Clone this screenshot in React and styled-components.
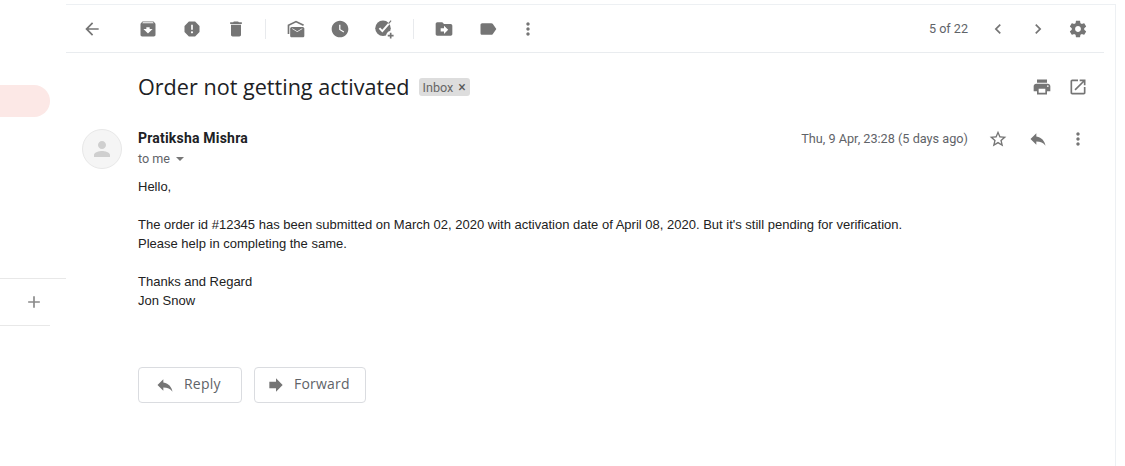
import styled, { createGlobalStyle } from 'styled-components'

const GlobalStyle = createGlobalStyle`
  html, body {
    margin: 0;
    height: 100%;
    background: #fff;
    overflow: hidden;
  }
  body {
    font-family: Roboto, "Liberation Sans", sans-serif;
  }
`

const paths = {
  back: 'M20 11H7.83l5.59-5.59L12 4l-8 8 8 8 1.41-1.41L7.83 13H20v-2z',
  archive: 'M20.54 5.23l-1.39-1.68C18.88 3.21 18.47 3 18 3H6c-.47 0-.88.21-1.16.55L3.46 5.23C3.17 5.57 3 6.02 3 6.5V19c0 1.1.9 2 2 2h14c1.1 0 2-.9 2-2V6.5c0-.48-.17-.93-.46-1.27zM12 17.5L6.5 12H10v-2h4v2h3.5L12 17.5zM5.12 5l.81-1h12l.94 1H5.12z',
  report: 'M15.73 3H8.27L3 8.27v7.46L8.27 21h7.46L21 15.73V8.27L15.73 3zM12 17.3c-.72 0-1.3-.58-1.3-1.3 0-.72.58-1.3 1.3-1.3.72 0 1.3.58 1.3 1.3 0 .72-.58 1.3-1.3 1.3zm1-4.3h-2V7h2v6z',
  trash: 'M6 19c0 1.1.9 2 2 2h8c1.1 0 2-.9 2-2V7H6v12zM19 4h-3.5l-1-1h-5l-1 1H5v2h14V4z',
  unread: 'M12 2L2 7v11h2V8.2L12 4.2l8.6 4.1 1-1.6L12 2zM7 9.5c-1.1 0-2 .9-2 2V20c0 1.1.9 2 2 2h13c1.1 0 2-.9 2-2v-8.500c0-1.100-.9-2-2-2H7zm6.500 6.200L7.500 12v-1l6 3.600 6-3.600v1l-6 3.700z',
  clock: 'M12 2C6.5 2 2 6.5 2 12s4.500 10 10 10 10-4.500 10-10S17.500 2 12 2zm4.200 14.200L11 13V7h1.500v5.200l4.500 2.700-.8 1.300z',
  move: 'M20 6h-8l-2-2H4c-1.100 0-1.990.9-1.990 2L2 18c0 1.100.9 2 2 2h16c1.100 0 2-.9 2-2V8c0-1.100-.9-2-2-2zm-8 12v-3H8v-4h4V8l5 5-5 5z',
  label: 'M17.630 5.840C17.270 5.330 16.670 5 16 5L5 5.010C3.900 5.010 3 5.900 3 7v10c0 1.100.9 1.990 2 1.990L16 19c.67 0 1.270-.33 1.630-.84L22 12l-4.370-6.160z',
  more: 'M12 8c1.100 0 2-.9 2-2s-.9-2-2-2-2 .9-2 2 .9 2 2 2zm0 2c-1.100 0-2 .9-2 2s.9 2 2 2 2-.9 2-2-.9-2-2-2zm0 6c-1.100 0-2 .9-2 2s.9 2 2 2 2-.9 2-2-.9-2-2-2z',
  prev: 'M15.410 7.410L14 6l-6 6 6 6 1.410-1.410L10.830 12z',
  next: 'M10 6L8.590 7.410 13.170 12l-4.580 4.590L10 18l6-6z',
  gear: 'M19.430 12.980c.04-.32.07-.64.07-.98s-.03-.66-.07-.98l2.110-1.650c.19-.15.24-.42.12-.64l-2-3.460c-.12-.22-.39-.3-.61-.22l-2.490 1c-.52-.4-1.080-.73-1.690-.98l-.38-2.650C14.460 2.180 14.250 2 14 2h-4c-.25 0-.46.18-.49.42l-.38 2.650c-.61.25-1.170.59-1.690.98l-2.490-1c-.23-.09-.49 0-.61.22l-2 3.460c-.13.22-.07.49.12.64l2.110 1.650c-.04.32-.07.65-.07.98s.03.66.07.98l-2.110 1.650c-.19.15-.24.42-.12.64l2 3.460c.12.22.39.3.61.22l2.490-1c.52.4 1.080.73 1.690.98l.38 2.650c.03.24.24.42.49.42h4c.25 0 .46-.18.49-.42l.38-2.650c.61-.25 1.170-.59 1.690-.98l2.490 1c.23.09.49 0 .61-.22l2-3.460c.12-.22.07-.49-.12-.64l-2.110-1.650zM12 15.500c-1.930 0-3.500-1.570-3.500-3.500s1.570-3.500 3.500-3.500 3.500 1.570 3.500 3.500-1.570 3.500-3.500 3.500z',
  print: 'M19 8H5c-1.660 0-3 1.340-3 3v6h4v4h12v-4h4v-6c0-1.660-1.340-3-3-3zm-3 11H8v-5h8v5zm3-7c-.55 0-1-.45-1-1s.45-1 1-1 1 .45 1 1-.45 1-1 1zm-1-9H6v4h12V3z',
  open: 'M19 19H5V5h7V3H5c-1.110 0-2 .9-2 2v14c0 1.100.89 2 2 2h14c1.100 0 2-.9 2-2v-7h-2v7zM14 3v2h3.590l-9.830 9.830 1.410 1.410L19 6.410V10h2V3h-7z',
  star: 'M22 9.240l-7.190-.62L12 2 9.190 8.630 2 9.240l5.460 4.730L5.820 21 12 17.270 18.180 21l-1.630-7.030L22 9.240zM12 15.400l-3.760 2.270 1-4.280-3.320-2.880 4.380-.38L12 6.100l1.710 4.040 4.380.38-3.320 2.880 1 4.280L12 15.400z',
  reply: 'M10 9V5l-7 7 7 7v-4.100c5 0 8.500 1.600 11 5.100-1-5-4-10-11-11z',
  forward: 'M12 8V4l8 8-8 8v-4H4V8z',
  person: 'M12 12c2.210 0 4-1.790 4-4s-1.790-4-4-4-4 1.790-4 4 1.790 4 4 4zm0 2c-2.670 0-8 1.340-8 4v2h16v-2c0-2.660-5.330-4-8-4z',
  add: 'M19 13h-6v6h-2v-6H5v-2h6V5h2v6h6v2z',
}

const Svg = styled.svg`
  display: block;
  flex: none;
  fill: ${p => p.$color || '#757575'};
`

const Icon = ({ name, size = 20, color }) => (
  <Svg width={size} height={size} viewBox="0 0 24 24" $color={color}>
    <path d={paths[name]} />
  </Svg>
)

// add to tasks: disc with a check running out of it and a small plus
const TaskIcon = () => (
  <Svg width={20} height={20} viewBox="0 0 24 24">
    <circle cx="10.800" cy="11" r="9.300" />
    <path d="M6.500 11l3.500 3.500L20.500 2.500" fill="none" stroke="#fff" strokeWidth="2.400" />
    <path d="M17.500 5.500l3-3.500" fill="none" stroke="#757575" strokeWidth="1.400" />
    <circle cx="20" cy="20" r="5.500" fill="#fff" />
    <path d="M19 16.500h2v2.500h2.500v2H21v2.500h-2V21h-2.500v-2H19z" />
  </Svg>
)

const Page = styled.div`
  display: flex;
  height: 466px;
  overflow: hidden;
`

const Sidebar = styled.aside`
  width: 66px;
  flex: none;
  padding-top: 85px;
  box-sizing: border-box;
`

const ActivePill = styled.div`
  width: 50px;
  height: 32px;
  background: #fce8e6;
  border-radius: 0 16px 16px 0;
`

const SideRule = styled.div`
  height: 1px;
  width: ${p => p.$width}px;
  background: #e8e8e8;
`

const HangoutsRow = styled.div`
  margin-top: 161px;
  width: 66px;
`

const AddRow = styled.div`
  height: 46px;
  width: 44px;
  display: flex;
  align-items: center;
  justify-content: flex-end;
`

const Main = styled.main`
  width: 1050px;
  margin-top: 4px;
  flex: none;
  border-top: 1px solid #edf0f3;
  border-right: 1px solid #edf0f3;
  box-sizing: border-box;
`

const Toolbar = styled.div`
  width: 1038px;
  height: 48px;
  box-sizing: border-box;
  border-bottom: 1px solid #e9ecef;
  padding: 0 6px;
  display: flex;
  align-items: center;
`

const ToolButton = styled.button`
  width: ${p => p.$width || 44}px;
  height: 40px;
  margin: 0;
  padding: 0;
  border: 0;
  background: none;
  display: flex;
  align-items: center;
  justify-content: center;
  flex: none;
`

const BackButton = styled(ToolButton)`
  margin-right: 14px;
`

const ToolDivider = styled.div`
  width: 1px;
  height: 20px;
  background: #e8eaed;
  margin: 0 8px 0 7px;
`

const Spacer = styled.div`
  flex: 1;
`

const Pager = styled.span`
  font-size: 12.600px;
  color: #5f6368;
  margin-right: 10px;
`

const SubjectRow = styled.div`
  display: flex;
  align-items: center;
  width: 1038px;
  height: 38px;
  margin-top: 15px;
  padding: 0 8px 0 72px;
  box-sizing: border-box;
`

const Subject = styled.h1`
  margin: 0;
  font: 400 21.600px/28px "Open Sans", sans-serif;
  color: #202124;
`

const InboxTag = styled.span`
  margin-left: 9px;
  height: 18px;
  padding: 0 4px;
  display: inline-flex;
  align-items: center;
  gap: 5px;
  border-radius: 3px;
  background: #dddddd;
  color: #666;
  font-size: 12.600px;
`

const TagClose = styled.span`
  font-size: 14px;
  line-height: 14px;
  color: #555;
`

const Message = styled.div`
  display: grid;
  grid-template-columns: 40px 1fr;
  column-gap: 16px;
  width: 1038px;
  margin-top: 19px;
  padding: 0 6px 0 16px;
  box-sizing: border-box;
`

const Avatar = styled.div`
  width: 40px;
  height: 40px;
  box-sizing: border-box;
  margin-top: 4px;
  border-radius: 50%;
  background: #f5f5f5;
  border: 1px solid #e8e8e8;
  display: flex;
  align-items: center;
  justify-content: center;
`

const HeaderRow = styled.div`
  display: flex;
  justify-content: space-between;
`

const Sender = styled.div`
  font-size: 14px;
  line-height: 20px;
  font-weight: 700;
  letter-spacing: 0.200px;
  color: #202124;
  margin-top: 3px;
`

const Recipient = styled.div`
  display: flex;
  align-items: center;
  gap: 6px;
  font-size: 12.600px;
  line-height: 20px;
  color: #5f6368;
  margin-top: 1px;
`

const Caret = styled.span`
  width: 0;
  height: 0;
  border-left: 4px solid transparent;
  border-right: 4px solid transparent;
  border-top: 4px solid #777;
`

const HeaderActions = styled.div`
  display: flex;
  align-items: center;
  height: 40px;
  margin-top: -6px;
`

const DateText = styled.span`
  font-size: 12.700px;
  color: #5f6368;
  margin: 0 10px 1px 0;
`

const Body = styled.div`
  margin-top: 8px;
  font: 13px/19px "Liberation Sans", Arial, sans-serif;
  color: #222;
`

const Line = styled.div`
  min-height: 19px;
`

const ButtonRow = styled.div`
  display: flex;
  gap: 12px;
  margin-top: 57px;
`

const ReplyButton = styled.button`
  width: ${p => p.$width}px;
  height: 36px;
  box-sizing: border-box;
  border: 1px solid #dadce0;
  border-radius: 4px;
  background: #fff;
  padding: 0 0 0 ${p => p.$pad}px;
  display: flex;
  align-items: center;
  gap: ${p => p.$gap}px;
  font: 500 14px "Open Sans", sans-serif;
  letter-spacing: 0.200px;
  color: #5f6368;
`

const ButtonLabel = styled.span`
  margin-bottom: 4px;
`

const App = () => {
  return (
    <Page>
      <GlobalStyle />
      <Sidebar>
        <ActivePill />
        <HangoutsRow>
          <SideRule $width={66} />
          <AddRow>
            <Icon name="add" size={20} color="#8a8a8a" />
          </AddRow>
          <SideRule $width={50} />
        </HangoutsRow>
      </Sidebar>
      <Main>
        <Toolbar>
          <BackButton $width={40}><Icon name="back" /></BackButton>
          <ToolButton><Icon name="archive" /></ToolButton>
          <ToolButton><Icon name="report" /></ToolButton>
          <ToolButton><Icon name="trash" /></ToolButton>
          <ToolDivider />
          <ToolButton><Icon name="unread" /></ToolButton>
          <ToolButton><Icon name="clock" /></ToolButton>
          <ToolButton><TaskIcon /></ToolButton>
          <ToolDivider />
          <ToolButton><Icon name="move" /></ToolButton>
          <ToolButton><Icon name="label" /></ToolButton>
          <ToolButton $width={36}><Icon name="more" /></ToolButton>
          <Spacer />
          <Pager>5 of 22</Pager>
          <ToolButton $width={40}><Icon name="prev" /></ToolButton>
          <ToolButton $width={40}><Icon name="next" /></ToolButton>
          <ToolButton $width={40}><Icon name="gear" /></ToolButton>
        </Toolbar>
        <SubjectRow>
          <Subject>Order not getting activated</Subject>
          <InboxTag>Inbox <TagClose>×</TagClose></InboxTag>
          <Spacer />
          <ToolButton $width={36}><Icon name="print" /></ToolButton>
          <ToolButton $width={36}><Icon name="open" /></ToolButton>
        </SubjectRow>
        <Message>
          <Avatar><Icon name="person" size={24} color="#cfcfcf" /></Avatar>
          <div>
            <HeaderRow>
              <div>
                <Sender>Pratiksha Mishra</Sender>
                <Recipient>to me <Caret /></Recipient>
              </div>
              <HeaderActions>
                <DateText>Thu, 9 Apr, 23:28 (5 days ago)</DateText>
                <ToolButton $width={40}><Icon name="star" /></ToolButton>
                <ToolButton $width={40}><Icon name="reply" /></ToolButton>
                <ToolButton $width={40}><Icon name="more" /></ToolButton>
              </HeaderActions>
            </HeaderRow>
            <Body>
              <Line>Hello,</Line>
              <Line />
              <Line>The order id #12345 has been submitted on March 02, 2020 with activation date of April 08, 2020. But it's still pending for verification.</Line>
              <Line>Please help in completing the same.</Line>
              <Line />
              <Line>Thanks and Regard</Line>
              <Line>Jon Snow</Line>
            </Body>
            <ButtonRow>
              <ReplyButton $width={104} $pad={16} $gap={9}><Icon name="reply" /><ButtonLabel>Reply</ButtonLabel></ReplyButton>
              <ReplyButton $width={112} $pad={11} $gap={8}><Icon name="forward" /><ButtonLabel>Forward</ButtonLabel></ReplyButton>
            </ButtonRow>
          </div>
        </Message>
      </Main>
    </Page>
  )
}

export default App
